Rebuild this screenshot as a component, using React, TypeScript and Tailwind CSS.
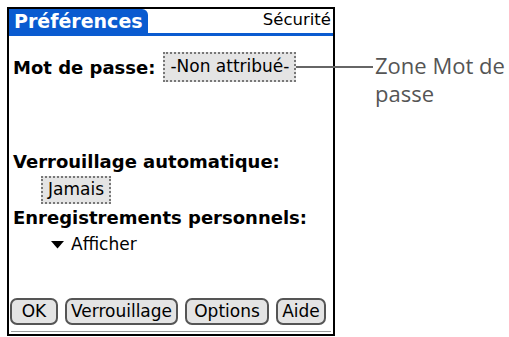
import { ReactNode } from "react";

const palm = { fontFamily: '"DejaVu Sans", "Liberation Sans", sans-serif' };
const label = { fontFamily: '"Open Sans", "Liberation Sans", sans-serif' };

function Btn({ children, w }: { children: ReactNode; w: string }) {
  return (
    <div
      className={`${w} h-[27px] flex items-center justify-center rounded-[7px] border-2 border-[#555] bg-[#e4e4e4] text-[17px] text-black leading-none`}
    >
      {children}
    </div>
  );
}

export default function App() {
  return (
    <div className="w-[509px] h-[337px] bg-white flex items-start pt-[7px] pl-[7px] overflow-hidden" style={palm}>
      {/* Palm screen */}
      <div className="w-[328px] h-[329px] border-2 border-black flex flex-col shrink-0">
        {/* Title bar */}
        <div className="flex items-stretch h-[27px]">
          <div className="bg-[#0a5bd0] text-white font-bold text-[19px] px-[5px] rounded-tr-[6px] leading-[25px]">
            Préférences
          </div>
          <div className="flex-1 flex justify-end items-start border-b-[3px] border-[#0a5bd0] pr-[2px] text-[16.5px] leading-[22px]">
            Sécurité
          </div>
        </div>

        {/* Body */}
        <div className="flex-1 px-[4px] flex flex-col">
          <div className="flex items-center mt-[16px] gap-[8px]">
            <span className="font-bold text-[18px]">Mot de passe:</span>
            <span className="border-2 border-dotted border-[#777] bg-[#e4e4e4] px-[5px] h-[30px] flex items-center text-[17px]">
              -Non attribué-
            </span>
          </div>

          <div className="font-bold text-[18px] mt-[69px] leading-[22px]">Verrouillage automatique:</div>
          <div className="pl-[28px] mt-[3px]">
            <span className="inline-flex border-2 border-dotted border-[#777] bg-[#e4e4e4] px-[5px] h-[28px] items-center text-[17px]">
              Jamais
            </span>
          </div>
          <div className="font-bold text-[18px] leading-[22px] mt-[3px]">Enregistrements personnels:</div>
          <div className="pl-[38px] mt-[3px] flex items-center gap-[7px] text-[17px]">
            <svg width="13" height="8" viewBox="0 0 13 8">
              <path d="M0 0 H13 L6.5 7.5 Z" fill="black" />
            </svg>
            <span>Afficher</span>
          </div>

          <div className="mt-auto flex items-center gap-[7px] -ml-[3px] pb-[6px]">
            <Btn w="w-[48px]">OK</Btn>
            <Btn w="w-[113px]">Verrouillage</Btn>
            <Btn w="w-[84px]">Options</Btn>
            <Btn w="w-[50px]">Aide</Btn>
          </div>
        </div>
        <div className="h-[1px] bg-[#999] mx-[2px] mb-[2px]" />
      </div>

      {/* Callout */}
      <div className="flex items-start mt-[44px] -ml-[39px]">
        <div className="w-[77px] h-[2px] bg-[#666] mt-[15px]" />
        <div className="text-[22px] text-[#555] leading-[28px] pl-[2px]" style={label}>
          Zone Mot de
          <br />
          passe
        </div>
      </div>
    </div>
  );
}
